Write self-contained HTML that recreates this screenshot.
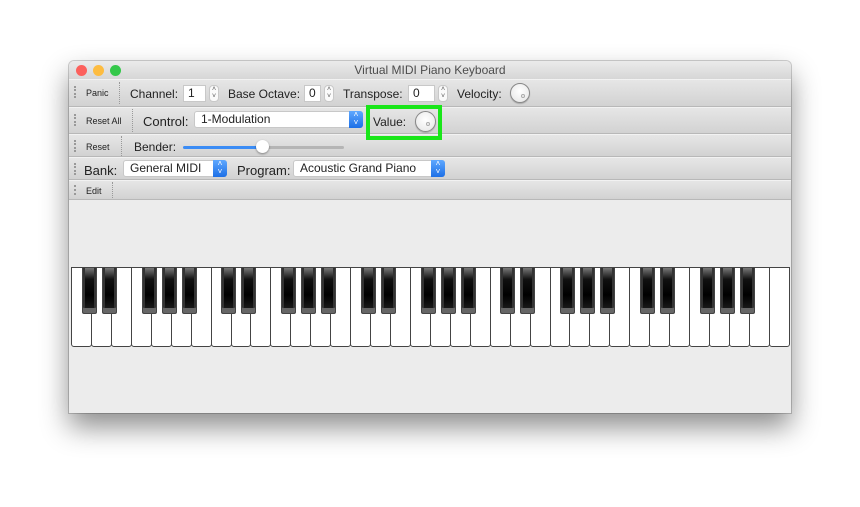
<!DOCTYPE html>
<html><head><style>
body{margin:0;width:860px;height:507px;background:#fff;position:relative;overflow:hidden;font-family:"Liberation Sans",sans-serif;font-size:12px;color:#222}
.a{position:absolute}
.win{left:69px;top:61px;width:722px;height:352px;background:#ececec;box-shadow:0 14px 28px rgba(0,0,0,.45),0 0 0 1px rgba(0,0,0,.18);border-radius:5px 5px 0 0;overflow:hidden}
.title{left:0;top:0;width:722px;height:18px;background:linear-gradient(#ebebeb,#d6d6d6);text-align:center;line-height:19px;font-size:12px;color:#4d4d4d}
.dot{top:4px;width:11px;height:11px;border-radius:50%}
.row{left:0;width:722px;background:linear-gradient(#e6e6e6,#d2d2d2);border-top:1px solid #f2f2f2;border-bottom:1px solid #b8b8b8;box-sizing:border-box}
.grip{width:2px;border-left:2px dotted #999}
.sep{width:0;border-left:1px dotted #999}
.btn{font-size:9px;color:#222}
.box{background:#fff;border:1px solid #c8c8c8;box-sizing:border-box;height:17px;line-height:15px;padding-left:4px;font-size:12px}
.spin{width:10px;height:17px;background:#fafafa;border:1px solid #c8c8c8;border-radius:4px;box-sizing:border-box;font-size:7px;line-height:7px;text-align:center;color:#555}
.sel{background:#fff;border:1px solid #c8c8c8;border-radius:3px;box-sizing:border-box;height:17px;line-height:15px;padding-left:6px}
.arr{position:absolute;right:-1px;top:-1px;width:14px;height:17px;background:linear-gradient(#5fa8ff,#1d6fe6);border-radius:0 3px 3px 0;color:#fff;font-size:8px;line-height:8px;text-align:center}
.knob{width:19px;height:19px;border-radius:50%;background:radial-gradient(circle at 50% 40%,#fff,#e4e4e4);border:1px solid #888;box-sizing:border-box;box-shadow:0 1px 1px rgba(0,0,0,.2)}
.knob:after{content:"";position:absolute;left:10px;top:10px;width:2px;height:2px;border:1px solid #aaa;border-radius:50%}
.w{flex:1;background:#fff;border:1px solid #444;border-radius:0 0 3px 3px;margin-right:-1px;box-sizing:border-box}
.b{top:267px;width:15px;height:47px;background:linear-gradient(#777,#111 25%,#000 60%,#222);border:1px solid #444;border-radius:0 0 2px 2px;box-sizing:border-box;box-shadow:inset 0 -5px 0 #666,inset 2px 0 0 #333,inset -2px 0 0 #333}
</style></head><body>
<div class="a win">
 <div class="a title">Virtual MIDI Piano Keyboard</div>
 <div class="a dot" style="left:7px;background:#fc605c"></div>
 <div class="a dot" style="left:24px;background:#fdbc40"></div>
 <div class="a dot" style="left:41px;background:#34c84a"></div>
 <div class="a row" style="top:18px;height:28px"></div>
 <div class="a row" style="top:46px;height:27px"></div>
 <div class="a row" style="top:73px;height:23px"></div>
 <div class="a row" style="top:96px;height:23px"></div>
 <div class="a row" style="top:119px;height:20px"></div>
</div>
<!-- row1 -->
<div class="a grip" style="left:74px;top:86px;height:12px"></div>
<div class="a btn" style="left:86px;top:88px">Panic</div>
<div class="a sep" style="left:119px;top:82px;height:22px"></div>
<div class="a" style="left:130px;top:87px">Channel:</div>
<div class="a box" style="left:183px;top:85px;width:23px">1</div>
<div class="a spin" style="left:209px;top:85px">˄<br>˅</div>
<div class="a" style="left:228px;top:87px">Base Octave:</div>
<div class="a box" style="left:304px;top:85px;width:17px">0</div>
<div class="a spin" style="left:324px;top:85px">˄<br>˅</div>
<div class="a" style="left:343px;top:87px">Transpose:</div>
<div class="a box" style="left:408px;top:85px;width:27px">0</div>
<div class="a spin" style="left:438px;top:85px">˄<br>˅</div>
<div class="a" style="left:457px;top:87px">Velocity:</div>
<div class="a knob" style="left:510px;top:83px;width:20px;height:20px"></div>
<!-- row2 -->
<div class="a grip" style="left:74px;top:114px;height:12px"></div>
<div class="a btn" style="left:86px;top:116px">Reset All</div>
<div class="a sep" style="left:132px;top:109px;height:23px"></div>
<div class="a" style="left:143px;top:114px;font-size:13px">Control:</div>
<div class="a sel" style="left:194px;top:111px;width:169px">1-Modulation<div class="arr">˄<br>˅</div></div>
<div class="a" style="left:366px;top:105px;width:76px;height:35px;border:4px solid #19e619;box-sizing:border-box"></div>
<div class="a" style="left:373px;top:115px">Value:</div>
<div class="a knob" style="left:415px;top:111px;width:21px;height:21px"></div>
<!-- row3 -->
<div class="a grip" style="left:74px;top:140px;height:12px"></div>
<div class="a btn" style="left:86px;top:142px">Reset</div>
<div class="a sep" style="left:121px;top:136px;height:20px"></div>
<div class="a" style="left:134px;top:140px">Bender:</div>
<div class="a" style="left:183px;top:146px;width:80px;height:3px;background:#3b8cf5;border-radius:2px"></div>
<div class="a" style="left:263px;top:146px;width:81px;height:3px;background:#b5b5b5;border-radius:2px"></div>
<div class="a" style="left:256px;top:140px;width:13px;height:13px;border-radius:50%;background:#fff;box-shadow:0 1px 2px rgba(0,0,0,.4)"></div>
<!-- row4 -->
<div class="a grip" style="left:74px;top:163px;height:12px"></div>
<div class="a" style="left:84px;top:163px;font-size:13px">Bank:</div>
<div class="a sel" style="left:123px;top:160px;width:104px">General MIDI<div class="arr">˄<br>˅</div></div>
<div class="a" style="left:237px;top:163px;font-size:13px">Program:</div>
<div class="a sel" style="left:293px;top:160px;width:152px">Acoustic Grand Piano<div class="arr">˄<br>˅</div></div>
<!-- row5 -->
<div class="a grip" style="left:74px;top:185px;height:10px"></div>
<div class="a btn" style="left:86px;top:186px">Edit</div>
<div class="a sep" style="left:112px;top:182px;height:16px"></div>
<!-- keys -->
<div class="a" style="left:71px;top:267px;width:718px;height:80px;display:flex">
<div class="w"></div><div class="w"></div><div class="w"></div><div class="w"></div><div class="w"></div><div class="w"></div><div class="w"></div><div class="w"></div><div class="w"></div><div class="w"></div><div class="w"></div><div class="w"></div><div class="w"></div><div class="w"></div><div class="w"></div><div class="w"></div><div class="w"></div><div class="w"></div><div class="w"></div><div class="w"></div><div class="w"></div><div class="w"></div><div class="w"></div><div class="w"></div><div class="w"></div><div class="w"></div><div class="w"></div><div class="w"></div><div class="w"></div><div class="w"></div><div class="w"></div><div class="w"></div><div class="w"></div><div class="w"></div><div class="w"></div><div class="w"></div>
</div>
<div class="a b" style="left:82px"></div><div class="a b" style="left:102px"></div><div class="a b" style="left:142px"></div><div class="a b" style="left:162px"></div><div class="a b" style="left:182px"></div>
<div class="a b" style="left:221.4px"></div><div class="a b" style="left:241.4px"></div><div class="a b" style="left:281.4px"></div><div class="a b" style="left:301.4px"></div><div class="a b" style="left:321.4px"></div>
<div class="a b" style="left:360.8px"></div><div class="a b" style="left:380.8px"></div><div class="a b" style="left:420.8px"></div><div class="a b" style="left:440.8px"></div><div class="a b" style="left:460.8px"></div>
<div class="a b" style="left:500.2px"></div><div class="a b" style="left:520.2px"></div><div class="a b" style="left:560.2px"></div><div class="a b" style="left:580.2px"></div><div class="a b" style="left:600.2px"></div>
<div class="a b" style="left:639.6px"></div><div class="a b" style="left:659.6px"></div><div class="a b" style="left:699.6px"></div><div class="a b" style="left:719.6px"></div><div class="a b" style="left:739.6px"></div>
</body></html>
